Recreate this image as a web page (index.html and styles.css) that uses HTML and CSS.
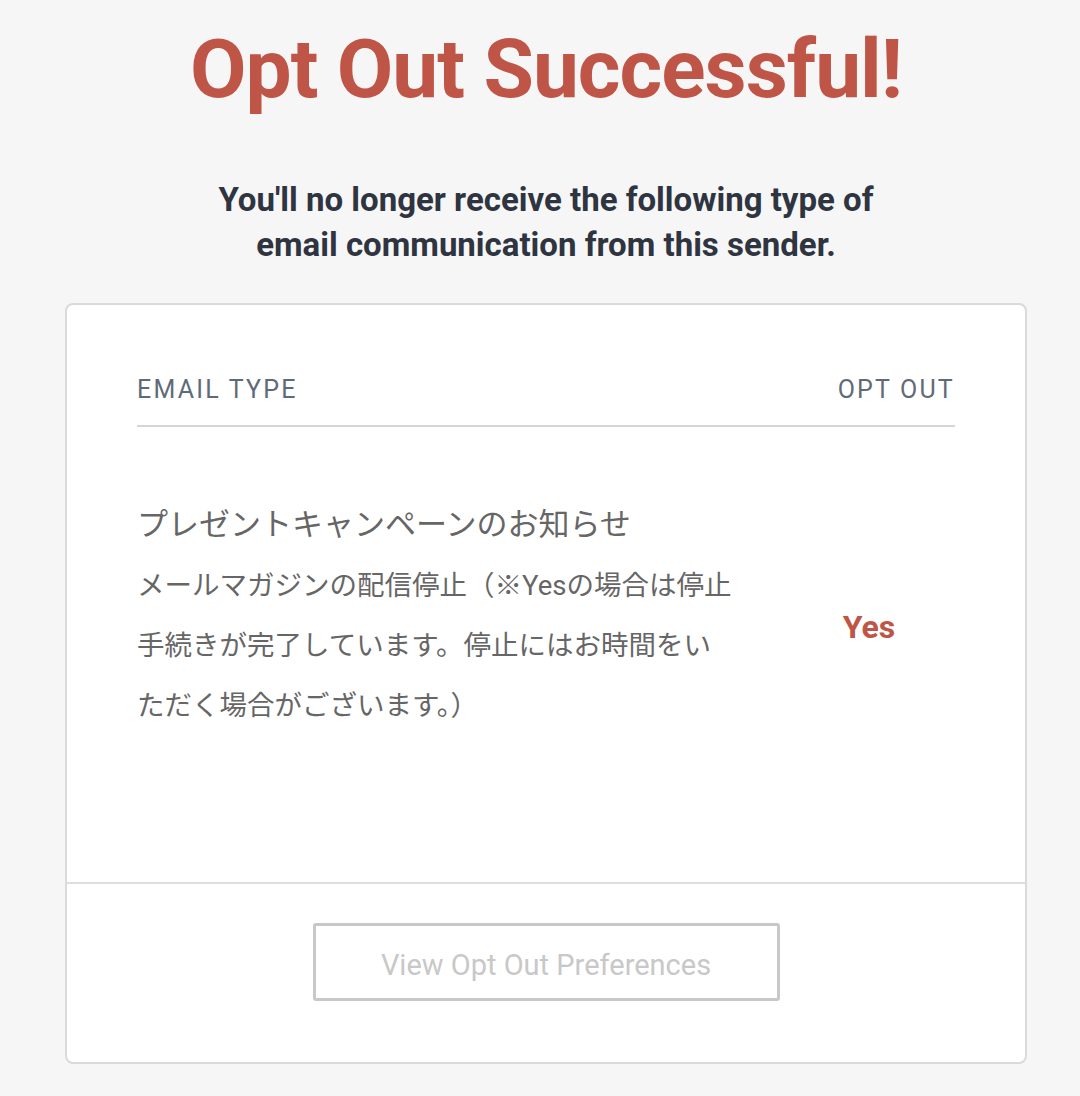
FILE: index.html
```html
<!DOCTYPE html>
<html lang="en">
<head>
    <meta charset="UTF-8">
    <meta name="viewport" content="width=device-width, initial-scale=1.0">
    <title>Opt Out Successful</title>
    <link rel="stylesheet" href="styles.css">
</head>
<body>
    <div class="page">
        <h1 class="title">Opt Out Successful!</h1>
        <p class="subtitle">You'll no longer receive the following type of<br>email communication from this sender.</p>

        <div class="card">
            <div class="card-body">
                <div class="table-head">
                    <span>EMAIL TYPE</span>
                    <span>OPT OUT</span>
                </div>
                <div class="table-row">
                    <div class="type">
                        <div class="type-name">プレゼントキャンペーンのお知らせ</div>
                        <div class="type-desc">メールマガジンの配信停止（※Yesの場合は停止手続きが完了しています。停止にはお時間をいただく場合がございます。）</div>
                    </div>
                    <div class="status">Yes</div>
                </div>
            </div>
            <div class="card-footer">
                <button class="btn" type="button">View Opt Out Preferences</button>
            </div>
        </div>
    </div>
</body>
</html>
```

FILE: styles.css
```css
* {
    margin: 0;
    padding: 0;
    box-sizing: border-box;
}
body {
    font-family: 'Roboto', 'Noto Sans CJK JP', sans-serif;
    background-color: #f6f6f6;
    padding-left: 12px;
}
.page {
    width: 962px;
    margin: 0 auto;
    padding-top: 21px;
}
.title {
    text-align: center;
    color: #bf5546;
    font-size: 82px;
    font-weight: 700;
    line-height: 96px;
    letter-spacing: -1px;
}
.subtitle {
    margin-top: 60px;
    text-align: center;
    color: #2f3441;
    font-size: 33px;
    font-weight: 700;
    line-height: 45px;
}
.card {
    margin-top: 36px;
    background-color: white;
    border: 2px solid #dadada;
    border-radius: 8px;
}
.card-body {
    padding: 70px 70px 0;
    height: 577px;
}
.table-head {
    display: flex;
    justify-content: space-between;
    color: #5f6a78;
    font-size: 25px;
    letter-spacing: 2.2px;
    line-height: 30px;
    padding-bottom: 20px;
    border-bottom: 2px solid #d6d6d6;
}
.table-row {
    display: flex;
    align-items: center;
    padding-top: 77px;
}
.type {
    width: 600px;
    color: #666;
}
.type-name {
    font-size: 31px;
    line-height: 42px;
}
.type-desc {
    margin-top: 10px;
    font-size: 27.5px;
    line-height: 60px;
}
.status {
    flex: 1;
    text-align: center;
    padding: 14px 0 0 46px;
    color: #bf5546;
    font-size: 32px;
    font-weight: 700;
}
.card-footer {
    border-top: 2px solid #dedede;
    display: flex;
    justify-content: center;
    padding: 39px 0 61px;
}
.btn {
    width: 467px;
    height: 78px;
    padding-top: 6px;
    background-color: white;
    border: 3px solid #c8c8c8;
    border-radius: 3px;
    color: #c8c8c8;
    font-family: 'Roboto', sans-serif;
    font-size: 29px;
}
```
